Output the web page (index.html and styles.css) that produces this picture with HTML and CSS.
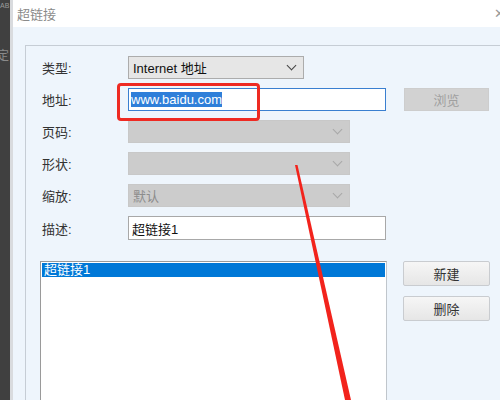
FILE: index.html
```html
<!DOCTYPE html>
<html lang="zh">
<head>
<meta charset="utf-8">
<title>超链接</title>
<link rel="stylesheet" href="styles.css">
</head>
<body>
<div class="screen">
  <div class="side">
    <span class="side-ab">AB</span>
    <span class="side-ding">定</span>
  </div>
  <div class="side-edge"></div>
  <div class="dialog">
    <div class="titlebar">
      <span class="title">超链接</span>
      <span class="close">✕</span>
    </div>
    <div class="body">
      <div class="group">
        <div class="rows">
          <div class="row">
            <span class="label">类型:</span>
            <div class="select select-short"><span>Internet 地址</span><span class="chev"></span></div>
          </div>
          <div class="row">
            <span class="label">地址:</span>
            <div class="input input-focus"><span class="sel">www.baidu.com</span></div>
            <div class="btn btn-disabled btn-browse">浏览</div>
          </div>
          <div class="row">
            <span class="label">页码:</span>
            <div class="select select-disabled"><span></span><span class="chev chev-light"></span></div>
          </div>
          <div class="row">
            <span class="label">形状:</span>
            <div class="select select-disabled"><span></span><span class="chev chev-light"></span></div>
          </div>
          <div class="row">
            <span class="label">缩放:</span>
            <div class="select select-disabled"><span class="muted">默认</span><span class="chev chev-light"></span></div>
          </div>
          <div class="row">
            <span class="label">描述:</span>
            <div class="input input-desc"><span>超链接1</span></div>
          </div>
        </div>
        <div class="list-area">
          <div class="list">
            <div class="list-item">超链接1</div>
          </div>
          <div class="list-buttons">
            <div class="btn">新建</div>
            <div class="btn">删除</div>
          </div>
        </div>
      </div>
    </div>
  </div>
  <div class="mark-rect"></div>
  <svg class="mark-line" width="500" height="400" viewBox="0 0 500 400">
    <polygon points="295,165 297.5,165 351,400 345,400" fill="#f2231c"/>
  </svg>
</div>
</body>
</html>
```
FILE: styles.css
```css
html, body {
  margin: 0;
  padding: 0;
}
body {
  width: 500px;
  height: 400px;
  overflow: hidden;
  font-family: "Liberation Sans", "Noto Sans CJK SC", sans-serif;
  font-size: 13px;
  color: #222;
}
.screen {
  position: relative;
  display: flex;
  width: 500px;
  height: 400px;
  overflow: hidden;
}
.side {
  width: 10px;
  background: #404040;
  display: flex;
  flex-direction: column;
  overflow: hidden;
  color: #9a9a9a;
}
.side-ab {
  font-size: 7px;
  line-height: 9px;
  margin-top: 1px;
}
.side-ding {
  font-size: 12px;
  margin-top: 36px;
  margin-left: -3px;
  color: #8a8a8a;
}
.side-edge {
  width: 3px;
  background: #d9dbde;
}
.dialog {
  flex: 1;
  display: flex;
  flex-direction: column;
  min-width: 0;
  min-height: 0;
  overflow: hidden;
}
.titlebar {
  flex-shrink: 0;
  height: 27px;
  background: #ffffff;
  display: flex;
  align-items: center;
  justify-content: space-between;
  padding-left: 4px;
}
.title {
  color: #8a8a8a;
  font-size: 13px;
}
.close {
  color: #9a9a9a;
  font-size: 13px;
  margin-right: -5px;
}
.body {
  flex: 1 0 auto;
  background: #eef5fc;
  padding-top: 18px;
  padding-left: 12px;
  display: flex;
}
.group {
  flex: 1;
  border-top: 1px solid #c6cdd5;
  border-left: 1px solid #c6cdd5;
  padding-top: 10px;
  padding-left: 14px;
}
.rows {
  display: flex;
  flex-direction: column;
  gap: 9px;
}
.row {
  display: flex;
  align-items: center;
  height: 23px;
}
.row:last-child {
  height: 24px;
}
.label {
  width: 86px;
  padding-left: 2px;
  color: #333;
  font-size: 13px;
}
.select {
  box-sizing: border-box;
  height: 23px;
  width: 222px;
  display: flex;
  align-items: center;
  justify-content: space-between;
  padding: 0 8px 0 4px;
  border: 1px solid #c4c4c4;
  background: #cccccc;
}
.select-short {
  width: 176px;
  background: #e6e6e6;
  border-color: #acacac;
  color: #111;
}
.select-disabled {
  border-color: #c8c8c8;
}
.muted {
  color: #8c8c8c;
}
.chev {
  width: 6px;
  height: 6px;
  border-right: 1.5px solid #444;
  border-bottom: 1.5px solid #444;
  transform: rotate(45deg);
  margin-top: -4px;
}
.chev-light {
  border-color: #a8a8a8;
}
.input {
  box-sizing: border-box;
  height: 23px;
  width: 258px;
  background: #ffffff;
  border: 1px solid #a8a8a8;
  display: flex;
  align-items: center;
  padding-left: 2px;
}
.input-focus {
  border-color: #3a7fd0;
}
.input-desc {
  height: 24px;
  padding-left: 3px;
  color: #111;
}
.sel {
  background: #2f7fd9;
  color: #ffffff;
  line-height: 15px;
}
.btn {
  box-sizing: border-box;
  width: 87px;
  height: 25px;
  border: 1px solid #c9ccd0;
  border-radius: 2px;
  background: linear-gradient(#f6f6f6, #e6e6e6);
  display: flex;
  align-items: center;
  justify-content: center;
  color: #333;
}
.btn-browse {
  margin-left: 18px;
  width: 85px;
  height: 23px;
}
.btn-disabled {
  background: #d2d2d2;
  border-color: #cdcdcd;
  color: #a0a0a0;
  border-radius: 0;
}
.list-area {
  display: flex;
  margin-top: 21px;
  gap: 16px;
}
.list {
  box-sizing: border-box;
  width: 347px;
  height: 170px;
  background: #ffffff;
  border: 1px solid #9a9a9a;
  border-right-color: #c0c6cc;
  padding: 1px;
}
.list-item {
  background: #0078d7;
  color: #ffffff;
  height: 14px;
  line-height: 14px;
  padding-left: 2px;
  font-size: 13px;
}
.list-buttons {
  display: flex;
  flex-direction: column;
  gap: 10px;
}
.mark-rect {
  position: absolute;
  left: 117px;
  top: 83px;
  width: 137px;
  height: 32px;
  border: 3px solid #ee2a22;
  border-radius: 4px;
}
.mark-line {
  position: absolute;
  left: 0;
  top: 0;
  pointer-events: none;
}
```
